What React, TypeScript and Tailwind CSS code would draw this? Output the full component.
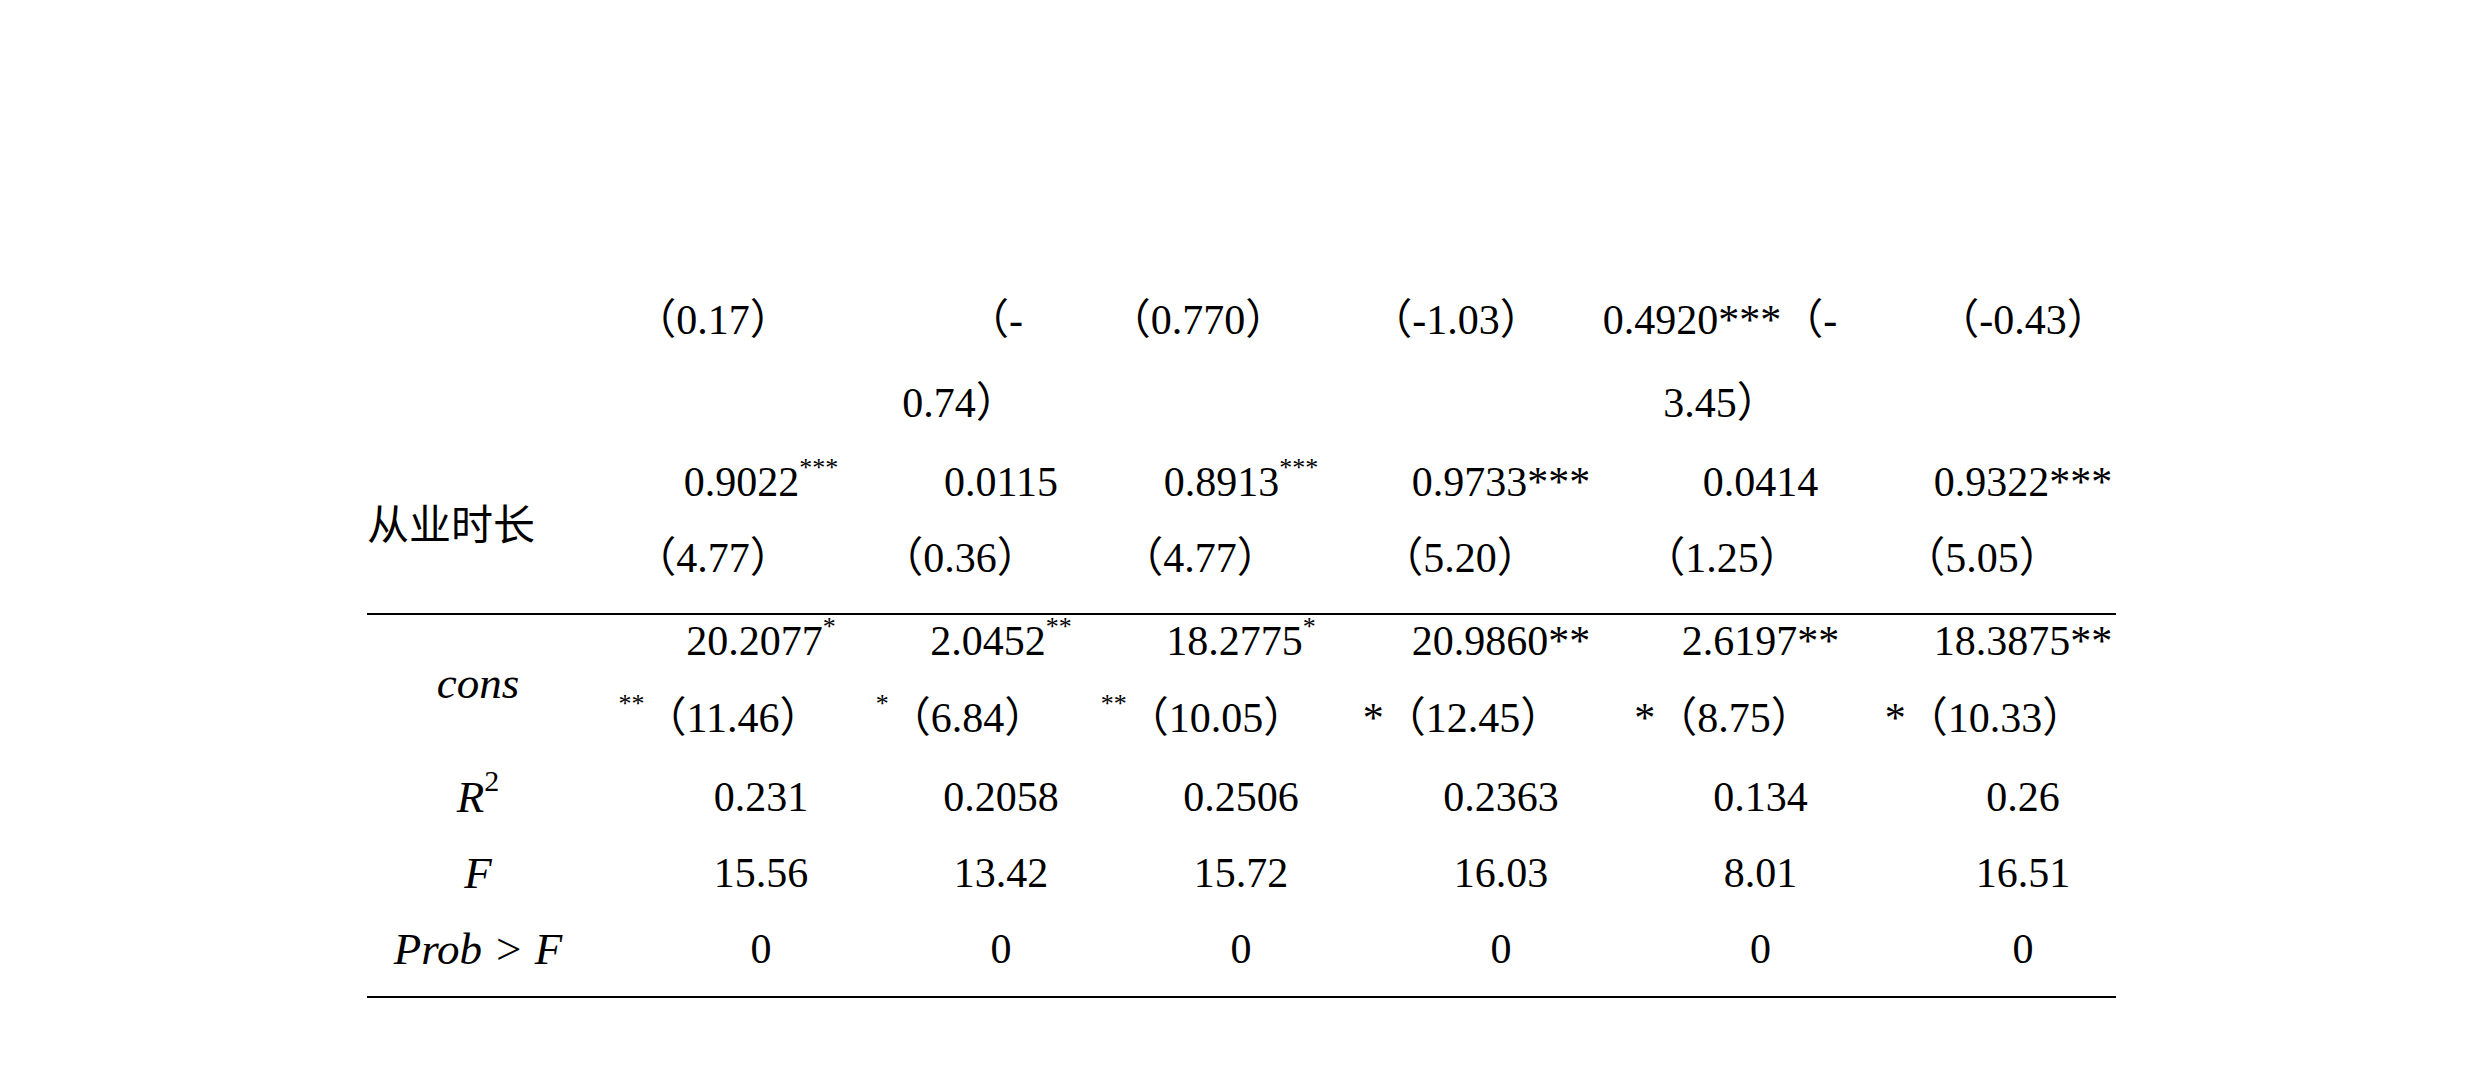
import type { ReactNode } from 'react'
import clsx from 'clsx'

const GRID = 'grid w-[1799px] grid-cols-[274px_240px_240px_240px_280px_239px_286px]'

function Cell({ children, className }: { children?: ReactNode; className?: string }) {
  return <div className={clsx('flex items-center justify-center whitespace-nowrap', className)}>{children}</div>
}

function Sup({ children }: { children: ReactNode }) {
  return <span className="relative -top-[14px] text-[26px]">{children}</span>
}

function Label({ children, className }: { children: ReactNode; className?: string }) {
  return (
    <Cell className={clsx("pr-[52px] font-['Liberation_Serif',serif] text-[45px] italic", className)}>{children}</Cell>
  )
}

const Rule = ({ className }: { className?: string }) => <div className={clsx('h-[2px] w-[1749px] bg-black', className)} />

export default function App() {
  return (
    <div className="h-[1090px] w-[2480px] overflow-hidden bg-white font-['Liberation_Serif','Noto_Sans_CJK_SC',serif] text-[42px] leading-none text-black">
      <div className="ml-[367px] pt-[279px]">
        {/* coefficient block */}
        <div className={clsx(GRID, 'grid-rows-[81px_86px_72px_80px]')}>
          <Cell />
          <Cell className="pr-[96px]">（0.17）</Cell>
          <Cell className="pr-[12px]">（-</Cell>
          <Cell className="pr-[86px]">（0.770）</Cell>
          <Cell className="pr-[90px]">（-1.03）</Cell>
          <Cell className="pr-[81px]">0.4920***（-</Cell>
          <Cell>（-0.43）</Cell>

          <Cell />
          <Cell />
          <Cell className="pr-[82px]">0.74）</Cell>
          <Cell />
          <Cell />
          <Cell className="pr-[79px]">3.45）</Cell>
          <Cell />

          <Cell className="row-span-2 justify-start font-['Noto_Sans_CJK_SC',sans-serif]">从业时长</Cell>
          <Cell>
            0.9022<Sup>***</Sup>
          </Cell>
          <Cell>0.0115</Cell>
          <Cell>
            0.8913<Sup>***</Sup>
          </Cell>
          <Cell>0.9733***</Cell>
          <Cell>0.0414</Cell>
          <Cell>0.9322***</Cell>

          <Cell className="pr-[96px]">（4.77）</Cell>
          <Cell className="pr-[82px]">（0.36）</Cell>
          <Cell className="pr-[82px]">（4.77）</Cell>
          <Cell className="pr-[82px]">（5.20）</Cell>
          <Cell className="pr-[77px]">（1.25）</Cell>
          <Cell className="pr-[82px]">（5.05）</Cell>
        </div>

        <Rule className="mt-[15px]" />

        {/* constant and fit statistics */}
        <div className={clsx(GRID, 'grid-rows-[51px_104px_54px_98px_54px]')}>
          <Label className="row-span-2 pb-[19px]">cons</Label>
          <Cell>
            20.2077<Sup>*</Sup>
          </Cell>
          <Cell>
            2.0452<Sup>**</Sup>
          </Cell>
          <Cell>
            18.2775<Sup>*</Sup>
          </Cell>
          <Cell>20.9860**</Cell>
          <Cell>2.6197**</Cell>
          <Cell>18.3875**</Cell>

          <Cell className="pr-[82px]">
            <Sup>**</Sup>（11.46）
          </Cell>
          <Cell className="pr-[80px]">
            <Sup>*</Sup>（6.84）
          </Cell>
          <Cell className="pr-[76px]">
            <Sup>**</Sup>（10.05）
          </Cell>
          <Cell className="pr-[77px]">*（12.45）</Cell>
          <Cell className="pr-[74px]">*（8.75）</Cell>
          <Cell className="pr-[77px]">*（10.33）</Cell>

          <Label>
            R<span className="relative -top-[16px] text-[30px] not-italic">2</span>
          </Label>
          <Cell>0.231</Cell>
          <Cell>0.2058</Cell>
          <Cell>0.2506</Cell>
          <Cell>0.2363</Cell>
          <Cell>0.134</Cell>
          <Cell>0.26</Cell>

          <Label>F</Label>
          <Cell>15.56</Cell>
          <Cell>13.42</Cell>
          <Cell>15.72</Cell>
          <Cell>16.03</Cell>
          <Cell>8.01</Cell>
          <Cell>16.51</Cell>

          <Label>Prob &gt; F</Label>
          <Cell>0</Cell>
          <Cell>0</Cell>
          <Cell>0</Cell>
          <Cell>0</Cell>
          <Cell>0</Cell>
          <Cell>0</Cell>
        </div>

        <Rule className="mt-[20px]" />
      </div>
    </div>
  )
}
